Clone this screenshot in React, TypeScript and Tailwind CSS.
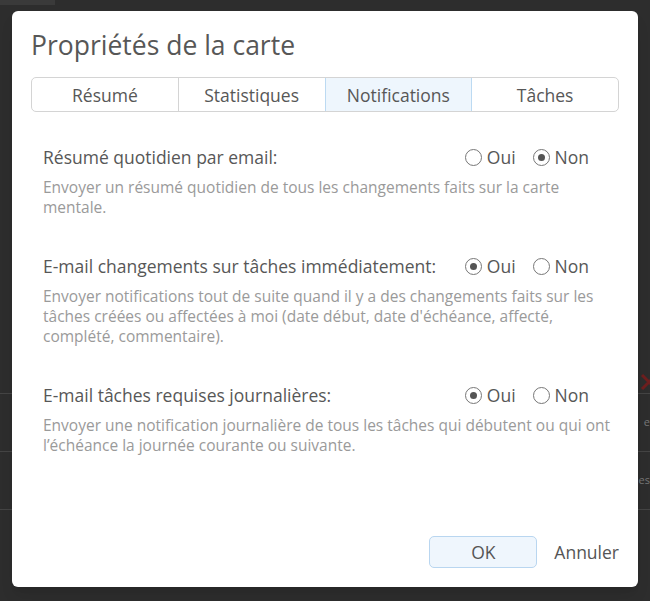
import React from "react";

const tabs = ["Résumé", "Statistiques", "Notifications", "Tâches"];

const settings = [
  {
    label: "Résumé quotidien par email:",
    value: "non",
    text: "Envoyer un résumé quotidien de tous les changements faits sur la carte mentale.",
  },
  {
    label: "E-mail changements sur tâches immédiatement:",
    value: "oui",
    text: "Envoyer notifications tout de suite quand il y a des changements faits sur les tâches créées ou affectées à moi (date début, date d'échéance, affecté, complété, commentaire).",
  },
  {
    label: "E-mail tâches requises journalières:",
    value: "oui",
    text: "Envoyer une notification journalière de tous les tâches qui débutent ou qui ont l’échéance la journée courante ou suivante.",
  },
];

const Radio = ({ checked, label }: { checked: boolean; label: string }) => (
  <span className="flex items-center gap-[5px]">
    <span className="w-[17px] h-[17px] rounded-full border border-[#777] flex items-center justify-center">
      {checked && <span className="w-[7px] h-[7px] rounded-full bg-[#555]" />}
    </span>
    {label}
  </span>
);

const App = () => {
  return (
    <div className="relative w-[650px] h-[601px] bg-[#2d2d2d] overflow-hidden font-['Open_Sans',sans-serif]">
      {/* page behind the modal */}
      <div className="h-[5px] w-[55px] bg-[#3a3a3a]" />
      <div className="flex flex-col mt-[365px]">
        <div className="h-[23px] flex justify-end items-center">
          <svg width="10" height="16" viewBox="0 0 10 16" className="shrink-0">
            <path d="M2 1 L16 15 M16 1 L2 15" stroke="#6e1f1f" strokeWidth="3" fill="none" />
          </svg>
        </div>
        <div className="h-[58px] border-t border-[#444] flex items-center justify-end text-[11px] text-[#777]">e</div>
        <div className="h-[58px] border-t border-[#444] flex items-center justify-end text-[11px] text-[#777]">es</div>
        <div className="border-t border-[#444]" />
      </div>

      {/* modal */}
      <div className="absolute left-[12px] top-[11px] w-[626px] h-[576px] bg-white rounded-[6px] shadow-lg flex flex-col px-[19px] pt-[16px] pb-[19px] text-[#575757]">
        <h1 className="text-[26.5px] leading-[36px]">Propriétés de la carte</h1>

        <div className="mt-[14px] h-[35px] flex border border-[#d4d4d4] rounded-[5px] overflow-hidden text-[17.5px]">
          {tabs.map((tab, i) => (
            <div
              key={tab}
              className={
                tab === "Notifications"
                  ? "flex-1 flex items-center justify-center pt-[1px] bg-[#eef6fd] border-x border-[#bcdaf2]"
                  : i === 0 || i === 3
                  ? "flex-1 flex items-center justify-center pt-[1px]"
                  : "flex-1 flex items-center justify-center pt-[1px] border-l border-[#d4d4d4]"
              }
            >
              {tab}
            </div>
          ))}
        </div>

        <div className="mt-[33px] pl-[12px] pr-[2px] flex flex-col gap-[37px]">
          {settings.map((s) => (
            <div key={s.label}>
              <div className="flex items-center justify-between text-[17.5px] leading-[24px]">
                <span>{s.label}</span>
                <div className="flex items-center gap-[17px] pr-[28px]">
                  <Radio checked={s.value === "oui"} label="Oui" />
                  <Radio checked={s.value === "non"} label="Non" />
                </div>
              </div>
              <p className="mt-[8px] text-[15.5px] leading-[20px] text-[#9a9a9a]">{s.text}</p>
            </div>
          ))}
        </div>

        <div className="mt-auto flex items-center justify-end gap-[17px] text-[17.5px]">
          <button className="w-[108px] h-[32px] rounded-[5px] border border-[#b9d6f0] bg-[#eff6fd] text-[#555]">
            OK
          </button>
          <button className="text-[#555]">Annuler</button>
        </div>
      </div>
    </div>
  );
};

export default App;
